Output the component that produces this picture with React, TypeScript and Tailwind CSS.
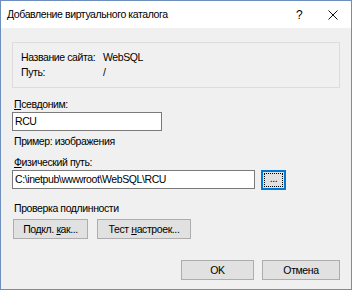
const font = { fontFamily: '"Liberation Sans", Arial, sans-serif' };

function Btn({ children, className = '' }: { children: React.ReactNode; className?: string }) {
  return (
    <button
      className={`h-[20px] border border-[#adadad] bg-[#e1e1e1] leading-none text-black flex items-center justify-center shrink-0 ${className}`}
    >
      {children}
    </button>
  );
}

export default function App() {
  return (
    <div
      className="w-[352px] h-[290px] border border-[#6e8fbe] bg-[#f0f0f0] flex flex-col text-[10.5px] tracking-[-0.4px] text-black whitespace-nowrap"
      style={font}
    >
      <div className="h-[27px] bg-white flex items-center pl-[6px] shrink-0">
        <span className="flex-1">Добавление виртуального каталога</span>
        <span className="w-[10px] mr-[22px] text-[12px]">?</span>
        <svg width="10" height="10" viewBox="0 0 10 10" className="mr-[13px]" stroke="#111" strokeWidth="1">
          <path d="M0.5 0.5 L9.5 9.5 M9.5 0.5 L0.5 9.5" />
        </svg>
      </div>

      <div className="flex flex-col px-[11px] pt-[14px]">
        <div className="h-[46px] border border-[#dcdcdc] pl-[8px] pt-[7px] leading-[15px]">
          <div className="flex">
            <span className="w-[82px] shrink-0">Название сайта:</span>
            <span>WebSQL</span>
          </div>
          <div className="flex">
            <span className="w-[82px] shrink-0">Путь:</span>
            <span>/</span>
          </div>
        </div>

        <div className="mt-[9px] ml-[2px] leading-[15px]">
          <u>П</u>севдоним:
        </div>
        <div className="w-[150px] h-[19px] border border-[#7a7a7a] bg-white flex items-center pl-[2px]">
          RCU
        </div>
        <div className="mt-[3px] ml-[2px] leading-[15px]">Пример: изображения</div>

        <div className="mt-[6px] ml-[2px] leading-[15px]">
          <u>Ф</u>изический путь:
        </div>
        <div className="flex gap-[6px] items-start">
          <div className="w-[243px] h-[19px] border border-[#7a7a7a] bg-white flex items-center pl-[2px]">
            C:\inetpub\wwwroot\WebSQL\RCU
          </div>
          <div className="w-[25px] h-[20px] border border-[#0078d7] shadow-[inset_0_0_0_1px_#0078d7] bg-[#e1e1e1] p-[2px]">
            <div className="w-full h-full border border-dotted border-black flex items-center justify-center leading-none pb-[3px]">
              ...
            </div>
          </div>
        </div>

        <div className="mt-[11px] ml-[2px] leading-[15px]">Проверка подлинности</div>
        <div className="mt-[3px] ml-px flex gap-[9px]">
          <Btn className="w-[75px]">
            Подкл.&nbsp;<u>к</u>ак...
          </Btn>
          <Btn className="w-[94px]">
            Тест&nbsp;<u>н</u>астроек...
          </Btn>
        </div>

        <div className="mt-[21px] flex justify-end gap-[8px]">
          <Btn className="w-[73px]">OK</Btn>
          <Btn className="w-[78px]">Отмена</Btn>
        </div>
      </div>
    </div>
  );
}
